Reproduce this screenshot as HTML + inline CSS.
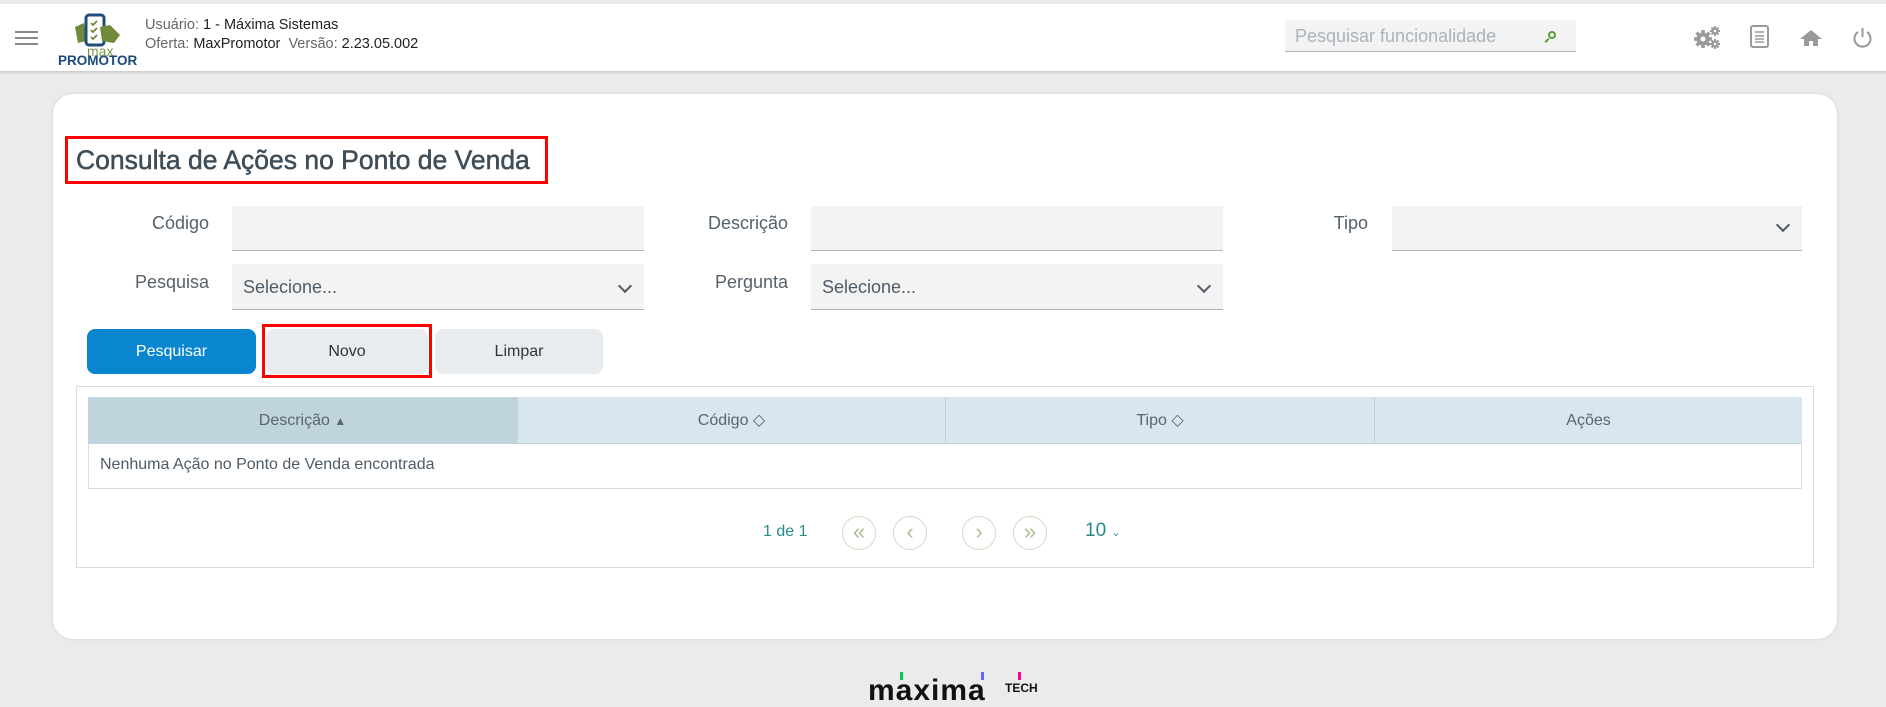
<!DOCTYPE html>
<html><head><meta charset="utf-8"><style>
*{box-sizing:border-box;margin:0;padding:0}
body{width:1886px;height:699px;background:#ebebeb;font-family:"Liberation Sans",sans-serif;position:relative;overflow:hidden;color:#4f5b66}
.a{position:absolute}
.hdr{left:0;top:4px;width:1886px;height:68px;background:#fff;border-bottom:1px solid #cfcfcf;box-shadow:0 1px 2px rgba(0,0,0,.12)}
.card{left:53px;top:94px;width:1784px;height:545px;background:#fff;border-radius:20px;box-shadow:0 0 3px rgba(0,0,0,.12)}
.lbl{font-size:18px;color:#55616b;text-align:right;width:200px}
.inp{background:#f3f3f3;border-bottom:1px solid #a9b4bb}
.sel{font-size:18px;color:#4f5b66;padding:13px 0 0 11px}
.chev{position:absolute;right:14px;top:17px;width:10px;height:10px;border-right:2px solid #4f5b66;border-bottom:2px solid #4f5b66;transform:rotate(45deg)}
.btn{border-radius:8px;font-size:16px;text-align:center;line-height:46px}
.th{top:397px;height:47px;font-size:16px;color:#5a6570;text-align:center;line-height:47px;border-bottom:1px solid #c3d0d8}
.circ{width:34px;height:34px;border:1.5px solid #cfdcc4;border-radius:50%;color:#a9c096;font-size:22px;text-align:center;line-height:30px}
</style></head><body>
<div class="a hdr"></div>
<div class="a" style="left:15px;top:31px;width:23px;height:2px;background:#888;box-shadow:0 6px 0 #888,0 12px 0 #888"></div>
<svg class="a" style="left:72px;top:13px" width="52" height="34" viewBox="0 0 52 34">
<path d="M3 14 L12 10 L14 28 L6 30 Z" fill="#6e8a3a"/>
<rect x="14" y="2" width="18" height="30" rx="3" fill="none" stroke="#1f4e78" stroke-width="3"/>
<path d="M19 10l2 2 4-4M19 17l2 2 4-4M19 24l2 2 4-4" stroke="#6e8a3a" stroke-width="1.8" fill="none"/>
<path d="M28 14 L38 12 L48 22 L42 30 L30 28 Z" fill="#6e8a3a"/>
</svg>
<div class="a" style="left:87px;top:45px;font-size:14px;color:#7d9a4a;line-height:12px">max</div>
<div class="a" style="left:58px;top:55px;font-size:13.5px;font-weight:bold;color:#1b4b7a;line-height:12px">PROMOTOR</div>
<div class="a" style="left:145px;top:16px;font-size:14.5px;color:#222;line-height:19px"><span style="color:#666">Usuário:</span> 1 - Máxima Sistemas<br><span style="color:#666">Oferta:</span> MaxPromotor &nbsp;<span style="color:#666">Versão:</span> 2.23.05.002</div>
<div class="a" style="left:1285px;top:20px;width:291px;height:32px;background:#f3f3f3;border-bottom:1px solid #a9b4bb;font-size:18px;color:#a9b3bb;padding:6px 0 0 10px">Pesquisar funcionalidade</div>
<div class="a" style="left:1548px;top:31px;width:8px;height:8px;border:2px solid #5aa030;border-radius:50%"></div>
<div class="a" style="left:1546px;top:38px;width:2px;height:5px;background:#5aa030;transform:rotate(45deg)"></div>
<svg class="a" style="left:1694px;top:25px" width="28" height="24" viewBox="0 0 28 24">
<g fill="#999"><circle cx="9" cy="14" r="6.5"/>
<g stroke="#999" stroke-width="3.5"><path d="M9 5v18M0 14h18M2.6 7.6l12.8 12.8M2.6 20.4L15.4 7.6"/></g>
<circle cx="21" cy="6" r="3.5"/><g stroke="#999" stroke-width="2"><path d="M21 1v10M16 6h10M17.5 2.5l7 7M17.5 9.5l7-7"/></g>
<circle cx="21" cy="19" r="3.5"/><g stroke="#999" stroke-width="2"><path d="M21 14v10M16 19h10M17.5 15.5l7 7M17.5 22.5l7-7"/></g></g>
<circle cx="9" cy="14" r="2.5" fill="#fff"/><circle cx="21" cy="6" r="1.3" fill="#fff"/><circle cx="21" cy="19" r="1.3" fill="#fff"/>
</svg>
<svg class="a" style="left:1750px;top:25px" width="19" height="23" viewBox="0 0 19 23"><rect x="1" y="1" width="17" height="21" rx="2" fill="none" stroke="#999" stroke-width="2"/><path d="M5 7h9M5 11h9M5 14h9M5 17h9" stroke="#999" stroke-width="1.5"/></svg>
<svg class="a" style="left:1799px;top:29px" width="24" height="18" viewBox="0 0 24 18"><path d="M12 1 L23 10 H19 V17 H14 V12 H10 V17 H5 V10 H1 Z" fill="#999"/></svg>
<svg class="a" style="left:1852px;top:27px" width="21" height="21" viewBox="0 0 21 21"><path d="M6 5 A8 8 0 1 0 15 5" fill="none" stroke="#999" stroke-width="2"/><path d="M10.5 1v9" stroke="#999" stroke-width="2"/></svg>

<div class="a card"></div>
<div class="a" style="left:65px;top:136px;width:483px;height:48px;border:3px solid #f00"></div>
<div class="a" style="left:76px;top:143px;font-size:26.5px;color:#3f4d58;line-height:34px;-webkit-text-stroke:0.5px #3f4d58">Consulta de Ações no Ponto de Venda</div>

<div class="a lbl" style="left:9px;top:213px">Código</div>
<div class="a inp" style="left:232px;top:206px;width:412px;height:45px"></div>
<div class="a lbl" style="left:588px;top:213px">Descrição</div>
<div class="a inp" style="left:811px;top:206px;width:412px;height:45px"></div>
<div class="a lbl" style="left:1168px;top:213px">Tipo</div>
<div class="a inp" style="left:1392px;top:206px;width:410px;height:45px"><div class="chev" style="top:14px"></div></div>

<div class="a lbl" style="left:9px;top:272px">Pesquisa</div>
<div class="a inp sel" style="left:232px;top:264px;width:412px;height:46px">Selecione...<div class="chev"></div></div>
<div class="a lbl" style="left:588px;top:272px">Pergunta</div>
<div class="a inp sel" style="left:811px;top:264px;width:412px;height:46px">Selecione...<div class="chev"></div></div>

<div class="a btn" style="left:87px;top:329px;width:169px;height:45px;background:#0a86d0;color:#fff">Pesquisar</div>
<div class="a btn" style="left:266px;top:329px;width:162px;height:45px;background:#e9ecef;color:#333">Novo</div>
<div class="a" style="left:262px;top:324px;width:170px;height:54px;border:3px solid #f00"></div>
<div class="a btn" style="left:435px;top:329px;width:168px;height:45px;background:#e9ecef;color:#333">Limpar</div>

<div class="a" style="left:76px;top:386px;width:1738px;height:182px;border:1px solid #dcdcdc"></div>
<div class="a" style="left:88px;top:397px;width:1714px;height:92px;border:1px solid #d3dde3"></div>
<div class="a th" style="left:88px;width:429px;background:#c0d4dd">Descrição <span style="font-size:12px">&#9650;</span></div>
<div class="a th" style="left:517px;width:428px;background:#d8e6ee;border-left:1px solid #c3d0d8">Código ◇</div>
<div class="a th" style="left:945px;width:429px;background:#d8e6ee;border-left:1px solid #c3d0d8">Tipo ◇</div>
<div class="a th" style="left:1374px;width:428px;background:#d8e6ee;border-left:1px solid #c3d0d8">Ações</div>
<div class="a" style="left:100px;top:456px;font-size:16px;color:#4f5b66">Nenhuma Ação no Ponto de Venda encontrada</div>

<div class="a" style="left:763px;top:523px;font-size:16px;color:#2a8a8a">1 de 1</div>
<div class="a circ" style="left:842px;top:516px">«</div>
<div class="a circ" style="left:893px;top:516px">‹</div>
<div class="a circ" style="left:962px;top:516px">›</div>
<div class="a circ" style="left:1013px;top:516px">»</div>
<div class="a" style="left:1085px;top:520px;font-size:19px;color:#2a8a8a">10 <span style="font-size:11px">&#8964;</span></div>

<div class="a" style="left:868px;top:676px;font-size:30px;font-weight:bold;color:#111;line-height:30px;letter-spacing:1px">maxima</div>
<div class="a" style="left:1005px;top:681px;font-size:12px;font-weight:bold;color:#111">TECH</div>
<div class="a" style="left:900px;top:672px;width:3px;height:8px;background:#0c5"></div>
<div class="a" style="left:981px;top:672px;width:3px;height:8px;background:#66f"></div>
<div class="a" style="left:1018px;top:672px;width:3px;height:8px;background:#f08"></div>
</body></html>
